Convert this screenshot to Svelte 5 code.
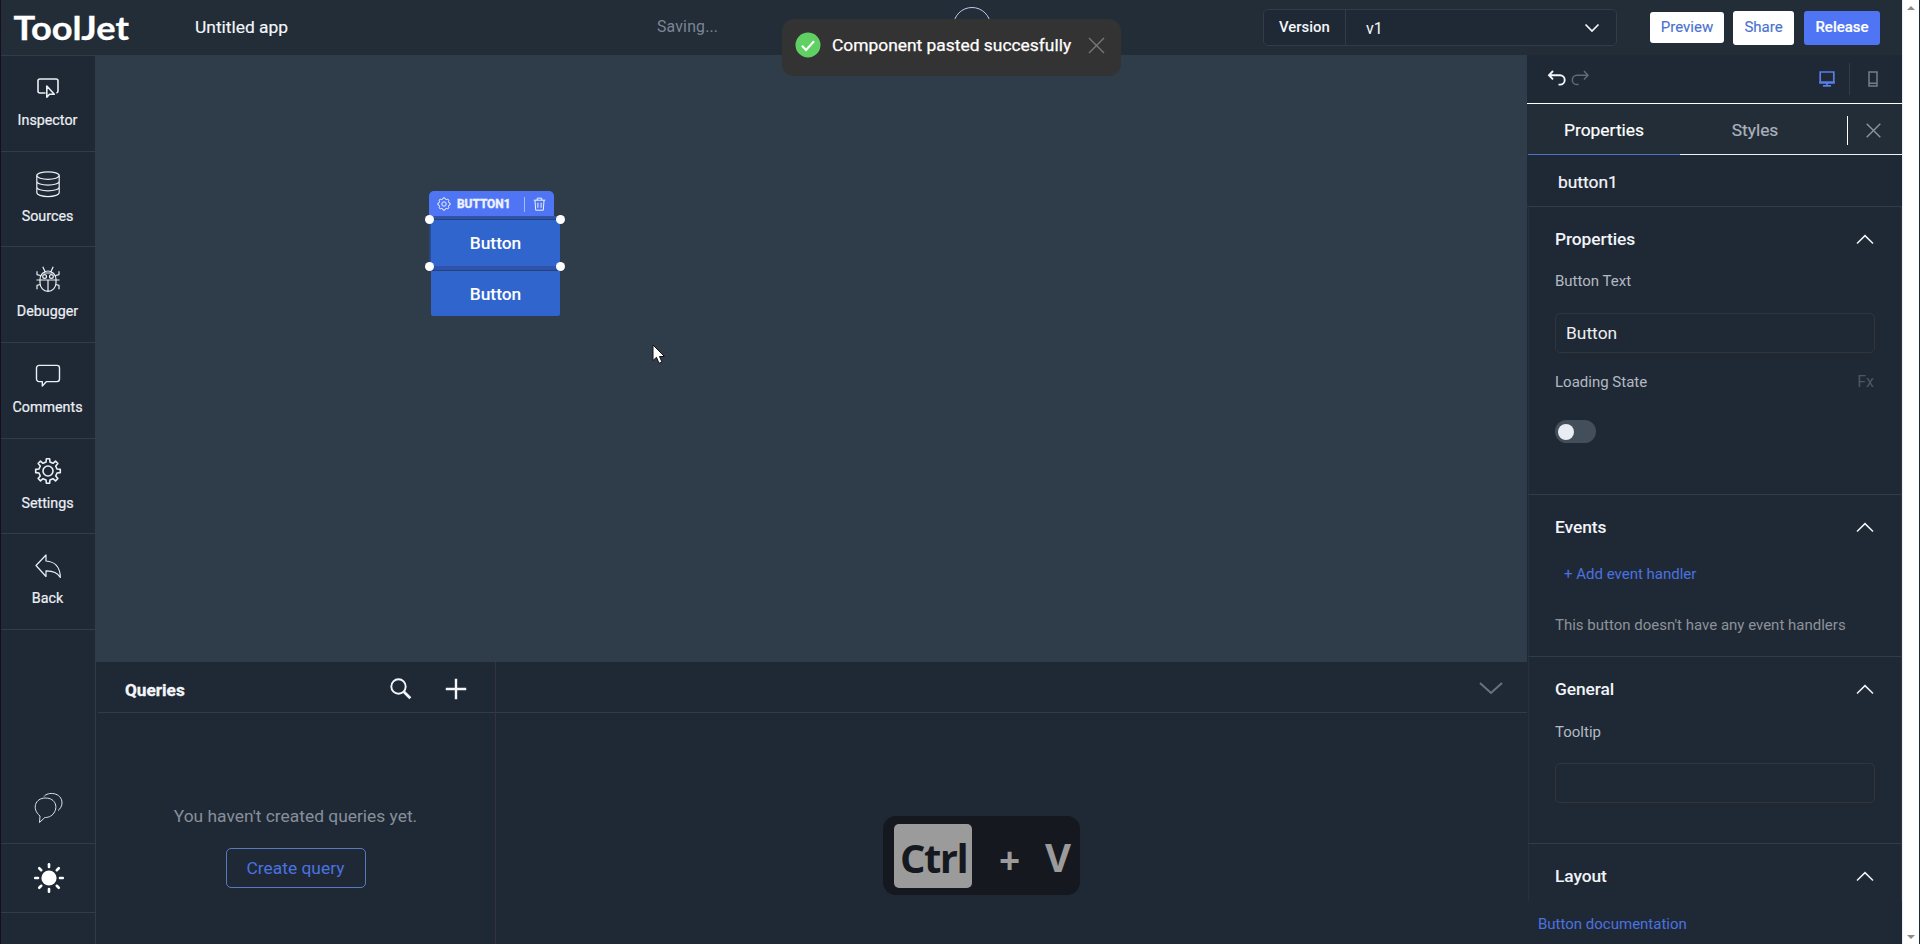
<script>
  const nav = [
    { label: 'Inspector', icon: 'inspector' },
    { label: 'Sources', icon: 'sources' },
    { label: 'Debugger', icon: 'debugger' },
    { label: 'Comments', icon: 'comments' },
    { label: 'Settings', icon: 'settings' },
    { label: 'Back', icon: 'back' }
  ];

  const gear = (cx, cy, outer, inner, teeth) => {
    const pts = [];
    const step = (Math.PI * 2) / teeth;
    for (let i = 0; i < teeth; i++) {
      const a = i * step - Math.PI / 2;
      for (const [offset, radius] of [[-0.27, inner], [-0.17, outer], [0.17, outer], [0.27, inner]]) {
        const t = a + offset * step;
        pts.push(`${(cx + radius * Math.cos(t)).toFixed(2)} ${(cy + radius * Math.sin(t)).toFixed(2)}`);
      }
    }
    return 'M' + pts.join('L') + 'Z';
  };
  const settingsGear = gear(13, 13, 12.4, 9.2, 8);
  const smallGear = gear(7, 7, 6.2, 5.2, 8);
  const rays = [0, 45, 90, 135, 180, 225, 270, 315];
</script>

{#snippet chevron()}
  <svg class="chev" width="18" height="11" viewBox="0 0 18 11"><path d="M1 9.500 9 1.600 17 9.500" /></svg>
{/snippet}

<div class="screen">
  <div class="app">
    <header>
      <svg class="logo" width="118" height="30" viewBox="0 0 118 30"><text x="0.500" y="25.500" textLength="115.500" lengthAdjust="spacingAndGlyphs">ToolJet</text></svg>
      <span class="app-name">Untitled app</span>
      <span class="saving">Saving...</span>
      <span class="avatar"></span>
      <div class="version">
        <span class="version-label">Version</span>
        <span class="version-value">v1</span>
        <svg width="16" height="10" viewBox="0 0 16 10"><path d="M1.500 1.500 8 8 14.500 1.500" /></svg>
      </div>
      <div class="actions">
        <button class="preview">Preview</button>
        <button>Share</button>
        <button class="release">Release</button>
      </div>
    </header>

    <div class="body">
      <nav>
        {#each nav as item}
          <div class="nav-item">
            <svg width="26" height="26" viewBox="0 0 26 26">
              {#if item.icon === 'inspector'}
                <g stroke-width="1.600"><path d="M10.500 18H5a2 2 0 0 1-2-2V6a2 2 0 0 1 2-2h16a2 2 0 0 1 2 2v10a2 2 0 0 1-1.600 2" /><path d="M11.800 11v11.200l2.700-3h4.800z" /></g>
              {:else if item.icon === 'sources'}
                <ellipse cx="13" cy="4.600" rx="11.200" ry="3.800" /><path d="M1.800 4.600v17c0 2.200 5 4 11.200 4s11.200-1.800 11.200-4v-17M1.800 10.300c0 2.200 5 3.800 11.200 3.800s11.200-1.600 11.200-3.800M1.800 16c0 2.200 5 3.800 11.200 3.800s11.200-1.600 11.200-3.800" />
              {:else if item.icon === 'debugger'}
                <path d="M5 13.500a8 8.500 0 0 1 16 0v3.500c0 4.600-3.500 8.300-8 8.300s-8-3.700-8-8.300zM5 14h16M13 14v11M7.500 7h11M10 5.500 7.800.8M16 5.500 18.200.8M5 14H1.500M24.500 14H21M5.300 9.500 2 8.600V5.200M20.700 9.500 24 8.600V5.200M5.300 18.500 2 19.400v3.800M20.700 18.500l3.300.9v3.800" /><circle cx="9.600" cy="10.500" r="1.900" /><circle cx="16.400" cy="10.500" r="1.900" />
              {:else if item.icon === 'comments'}
                <path d="M4 3.400h18a2.500 2.500 0 0 1 2.500 2.500v11.200a2.500 2.500 0 0 1-2.500 2.500H11.500L7.300 24v-4.400H4a2.500 2.500 0 0 1-2.500-2.500V5.900A2.500 2.500 0 0 1 4 3.400z" stroke-width="1.400" />
              {:else if item.icon === 'settings'}
                <path d={settingsGear} stroke-width="1.600" /><circle cx="13" cy="13" r="5" stroke-width="1.600" />
              {:else}
                <path d="M1 12.500 11 2v6c8.500.5 14.200 6 14.300 16.500-2.600-4.700-7.300-6.800-14.300-6.700v5.700z" />
              {/if}
            </svg>
            <span>{item.label}</span>
          </div>
        {/each}
        <div class="chat">
          <svg width="30" height="32" viewBox="0 0 30 32"><path d="M10 4.500C13.500-.5 28 0 28 11c0 3-1.800 6-4 7.500M5.500 30.500l.5-6.500C-2.500 17 1 6 11.500 6S24.500 16 19 22.200C16 25.500 12 25.500 10.800 25.500z" /></svg>
        </div>
        <div class="theme">
          <svg width="32" height="32" viewBox="0 0 32 32"><circle cx="16" cy="16" r="7.600" />{#each rays as r}<path d="M16 2.200v2.800" transform="rotate({r} 16 16)" />{/each}</svg>
        </div>
      </nav>

      <main>
        <div class="canvas">
          <div class="tag">
            <svg width="14" height="14" viewBox="0 0 14 14"><path d={smallGear} /><circle cx="7" cy="7" r="2.200" /></svg>
            <span>BUTTON1</span>
            <i></i>
            <svg width="13" height="14" viewBox="0 0 13 14"><path d="M.8 3.200h11.400M4.200 3V1.200h4.600V3M2 3.400l.7 9.800h7.600l.7-9.800M4.900 5.800v5M8.100 5.800v5" /></svg>
          </div>
          <div class="widget selected">Button<b></b><b></b><b></b><b></b></div>
          <div class="widget second">Button</div>
          <svg class="cursor" width="14" height="21" viewBox="0 0 14 21"><path d="M1 1v15.500l3.500-3.200 2.500 6 3-1.300-2.500-5.500h5z" /></svg>
        </div>

        <div class="queries">
          <section class="list">
            <div class="qhead">
              <h2>Queries</h2>
              <svg width="22" height="22" viewBox="0 0 22 22"><circle cx="8.500" cy="8.500" r="7.200" stroke-width="1.900" /><path d="m13.800 13.800 6.500 6.500" stroke-width="2.800" /></svg>
              <svg width="22" height="22" viewBox="0 0 22 22"><path d="M11 .8v20.400M.8 11h20.400" stroke-width="2.400" /></svg>
            </div>
            <div class="empty">
              <p>You haven't created queries yet.</p>
              <button>Create query</button>
            </div>
          </section>
          <section class="editor">
            <div class="ehead">
              <svg width="24" height="13" viewBox="0 0 24 13"><path d="m1 1 11 10L23 1" /></svg>
            </div>
          </section>
        </div>
      </main>

      <aside>
        <div class="tools">
          <svg width="20" height="17" viewBox="0 0 20 17"><path d="M6 1 2 5.200 6 9.400M2 5.200h11a4.600 4.600 0 0 1 0 9.400h-1.500" /></svg>
          <svg class="redo" width="20" height="17" viewBox="0 0 20 17"><path d="M14 1 18 5.200 14 9.400M18 5.200H7a4.600 4.600 0 0 0 0 9.400h1.500" /></svg>
          <svg class="desktop" width="16" height="16" viewBox="0 0 16 16"><path d="M1.200 1h13.600v10.500H1.200zM1 11h14v1H1zM4 14.900h8M8 12v3" /></svg>
          <i></i>
          <svg class="mobile" width="10" height="16" viewBox="0 0 10 16"><path d="M1 1h8v14H1zM1 12.300h8" /></svg>
        </div>
        <div class="tabs">
          <span class="active">Properties</span>
          <span>Styles</span>
          <div class="close"><i></i><svg width="15" height="15" viewBox="0 0 15 15"><path d="m.7.700 13.600 13.600M14.300.7.700 14.300" /></svg></div>
        </div>
        <div class="name">button1</div>
        <section class="group props">
          <h3>Properties {@render chevron()}</h3>
          <label for="text">Button Text</label>
          <div class="input" id="text">Button</div>
          <div class="row"><span>Loading State</span><em>Fx</em></div>
          <div class="toggle"></div>
        </section>
        <section class="group events">
          <h3>Events {@render chevron()}</h3>
          <a href="#add">+ Add event handler</a>
          <p>This button doesn't have any event handlers</p>
        </section>
        <section class="group general">
          <h3>General {@render chevron()}</h3>
          <div class="tip-label">Tooltip</div>
          <div class="input"></div>
        </section>
        <section class="group layout">
          <h3>Layout {@render chevron()}</h3>
        </section>
        <a class="doc" href="#doc">Button documentation</a>
      </aside>
    </div>
  </div>
  <div class="scrollbar"><i class="up"></i><i class="down"></i></div>

  <div class="toast">
    <svg width="26" height="26" viewBox="0 0 26 26"><circle cx="13" cy="13" r="12.500" /><path d="m7 13.700 4 4.300 8-8.700" /></svg>
    <span>Component pasted succesfully</span>
    <svg class="x" width="17" height="17" viewBox="0 0 17 17"><path d="m1 1 15 15M16 1 1 16" /></svg>
  </div>
  <div class="keys"><kbd>Ctrl</kbd><span class="plus">+</span><span>V</span></div>
</div>

<style>
  :global(body) { background: #1f2935; overflow: hidden; }
  .screen { position: relative; display: flex; width: 1920px; height: 944px; box-sizing: border-box; border-left: 1px solid #16101c; overflow: hidden; font: 17.4px/24px Roboto, sans-serif; color: #f4f6fa; background: #1f2935; }
  .screen * { box-sizing: border-box; }
  svg { display: block; flex: none; fill: none; stroke: currentColor; overflow: visible; }
  h2, h3, p { margin: 0; font-size: inherit; }
  button { font: inherit; cursor: pointer; padding: 0; }
  a { color: #4b72e0; text-decoration: none; }
  .app { width: 1901px; display: flex; flex-direction: column; }

  header { height: 55px; flex: none; display: flex; align-items: center; background: #222d38; padding: 0 22px 0 12px; }
  .logo { margin-top: 2px; }
  .logo text { font: 700 32px Lato, sans-serif; fill: #fff; stroke: #fff; stroke-width: .3px; }
  .app-name { margin: -1px 0 0 64px; width: 462px; -webkit-text-stroke: .15px; }
  .saving { color: #7c8595; font-size: 15.800px; letter-spacing: .2px; width: 296px; margin-top: -1px; }
  .avatar { width: 38px; height: 38px; margin-top: -3px; border: 1.500px solid #b9cdf0; border-radius: 50%; }
  .version { margin-left: 272px; width: 354px; height: 37px; display: flex; align-items: center; border: 1px solid #2f3c49; border-radius: 5px; background: #1f2935; }
  .version-label { width: 82px; height: 100%; line-height: 34px; padding-left: 15px; border-right: 1px solid #2f3c49; font-weight: 500; font-size: 14.900px; }
  .version-value { flex: 1; padding: 3px 0 0 20px; font-size: 16px; }
  .version svg { margin-right: 16px; stroke-width: 1.700; }
  .actions { display: flex; align-items: center; gap: 9px; margin-left: 33px; }
  .actions button { height: 34px; width: 61px; border: 0; border-radius: 3px; background: #fff; color: #4a73d0; font-size: 15px; padding-bottom: 1px; -webkit-text-stroke: .15px; }
  .actions .preview { width: 74px; height: 31px; }
  .actions .release { width: 76px; background: #4f75f5; color: #fff; font-weight: 500; margin-left: 1px; }

  .body { flex: 1; min-height: 0; display: flex; }
  nav { width: 95px; display: flex; flex-direction: column; border-right: 1px solid #2f3d4a; border-top: 1px solid #2f3d4a; background: #1f2935; }
  .nav-item { height: 95.700px; flex: none; display: flex; flex-direction: column; align-items: center; padding: 19px 1px 0 0; border-bottom: 1px solid #2f3d4a; font-size: 14.300px; color: #eceff4; }
  .nav-item svg { stroke-width: 1.200; stroke-linejoin: round; }
  .nav-item span { line-height: 20px; margin-top: 9px; -webkit-text-stroke: .2px; }
  .chat { flex: 1; display: flex; align-items: flex-end; justify-content: center; padding: 0 0 19px 1px; color: #dfe4ee; border-bottom: 1px solid #2f3d4a; }
  .theme { height: 69px; margin-bottom: 31px; display: grid; place-items: center; padding-left: 2px; border-bottom: 1px solid #2f3d4a; color: #fff; }
  .theme circle { fill: #fff; stroke: none; }
  .theme path { stroke-width: 2.600; stroke-linecap: round; }

  main { width: 1431px; display: flex; flex-direction: column; }
  .canvas { position: relative; height: 607px; flex: none; background: #2f3c49; }
  .tag { position: absolute; left: 333px; top: 136px; width: 125px; height: 28px; padding: 0 8px 2px 8px; display: flex; align-items: center; gap: 6px; background: #4f75f5; border-radius: 5px 5px 0 0; font: 700 11.900px/16px Roboto, sans-serif; color: #eef2ff; -webkit-text-stroke: .4px; }
  .tag i { width: 1px; height: 15px; margin: 0 2px 0 auto; background: #aabcf5; }
  .widget { position: absolute; left: 335px; width: 129px; display: grid; place-items: center; background: #3065ce; color: #fff; font-weight: 500; }
  .selected { top: 161px; height: 54px; border-top: 3px solid #3053a9; border-bottom: 4px solid #3053a9; box-shadow: inset 0 1px #21417f, -1.500px 0 #284c9c, 0 1px #21417f; }
  .selected b { position: absolute; width: 9px; height: 9px; border-radius: 50%; background: #fff; }
  .selected b:nth-child(1) { left: -6px; top: -4px; }
  .selected b:nth-child(2) { right: -5px; top: -4px; }
  .selected b:nth-child(3) { left: -6px; bottom: -5px; }
  .selected b:nth-child(4) { right: -5px; bottom: -5px; }
  .second { top: 216px; height: 45px; border-radius: 0 0 2px 2px; }
  .cursor { position: absolute; left: 556px; top: 289px; fill: #fff; stroke: #161018; }

  .queries { flex: 1; display: flex; }
  .list { width: 400px; border-right: 1px solid #33353b; }
  .qhead, .ehead { height: 51px; display: flex; align-items: center; border-bottom: 1px solid #2f3d4a; }
  .qhead { margin-left: 2px; padding: 6px 28px 0 27px; }
  .qhead h2 { flex: 1; font-weight: 700; font-size: 17.200px; -webkit-text-stroke: .3px; }
  .qhead svg { margin: -3px 0 0 33px; }
  .empty { display: flex; flex-direction: column; align-items: center; padding-top: 91px; }
  .empty p { color: #878f9b; }
  .empty button { margin-top: 20px; width: 140px; height: 40px; border: 1px solid #5779bd; border-radius: 5px; background: none; color: #4b72e0; }
  .editor { flex: 1; }
  .ehead { justify-content: flex-end; padding: 3px 24px 0 0; color: #69737f; }
  .ehead svg { stroke-width: 2; }

  aside { width: 375px; display: flex; flex-direction: column; overflow: hidden; background: #1f2935; }
  .tools { height: 49px; flex: none; display: flex; align-items: center; padding: 0 24px 1px 20px; border-bottom: 1.500px solid #fff; }
  .tools svg { stroke-width: 1.900; }
  .tools .redo { margin-left: 3px; color: #606b79; stroke-width: 1.500; }
  .tools .desktop { margin-left: auto; color: #587ee8; stroke-width: 1.700; }
  .tools i { width: 1px; height: 32px; background: #2f3d4a; margin: 0 18px 0 14px; }
  .tools .mobile { color: #747d8a; stroke-width: 1.500; }
  .tabs { height: 51px; flex: none; display: flex; background: #222d38; color: #abb2bd; padding-left: 1px; }
  .tabs span { width: 150px; padding-top: 14px; text-align: center; border-bottom: 1px solid #eef2f6; -webkit-text-stroke: .2px; }
  .tabs .active { width: 152px; color: #fff; border-color: #4d73c4; }
  .tabs .close { flex: 1; display: flex; align-items: center; gap: 18px; padding: 2px 0 0 17px; border-bottom: 1px solid #eef2f6; color: #8b95a4; }
  .close i { width: 1px; height: 29px; background: #fff; }
  .close svg { stroke-width: 1.400; }
  .name { height: 52px; flex: none; padding: 15px 0 0 31px; border-bottom: 1px solid #2f3d4a; -webkit-text-stroke: .2px; }
  .group { flex: none; margin-left: 1px; padding: 20px 27px 0 26px; border: 1px solid #26313d; border-top: 0; border-bottom: 1px solid #2f3d4a; border-right-color: #33353b; font-size: 15px; color: #b3b9c3; }
  .group h3 { display: flex; justify-content: space-between; align-items: center; font-size: 17.400px; font-weight: 500; letter-spacing: -.1px; color: #f1f4f9; }
  .chev { stroke-width: 1.500; }
  .props { height: 288px; }
  .props label { display: block; margin-top: 18px; }
  .input { height: 40px; width: 320px; margin-top: 20px; border: 1px solid #333539; border-radius: 5px; padding-left: 10px; line-height: 38px; font-size: 17.400px; color: #eceff0; }
  .row { display: flex; justify-content: space-between; margin-top: 17px; }
  .row em { font-style: normal; font-size: 16px; color: #4b5663; }
  .toggle { margin-top: 26px; width: 41px; height: 23px; border-radius: 12px; background: #434e5b; padding: 3.500px 3px; }
  .toggle::before { content: ''; display: block; width: 16px; height: 16px; border-radius: 50%; background: #e9ecf2; }
  .events { height: 162px; }
  .events a { display: block; margin: 23px 0 0 9px; }
  .events p { margin-top: 27px; color: #8d9299; }
  .general { height: 187px; }
  .tip-label { margin-top: 19px; }
  .general .input { margin-top: 19px; }
  .layout { height: 57px; border-bottom: 0; }
  .doc { margin: 11px 0 0 11px; font-size: 15px; }

  .scrollbar { width: 17px; background: #fff; border-left: 1px solid #e8edf6; display: flex; flex-direction: column; justify-content: space-between; align-items: center; padding: 6px 0 5px; }
  .scrollbar i { border: 4px solid transparent; }
  .scrollbar .up { border-top: 0; border-bottom-color: #8b8b8b; }
  .scrollbar .down { border-bottom: 0; border-top-color: #8b8b8b; }

  .toast { position: absolute; left: 781px; top: 19px; width: 339px; height: 57px; display: flex; align-items: center; padding: 0 16px 5px 13px; border-radius: 12px; background: #333; color: #fff; }
  .toast circle { fill: #61d064; stroke: none; }
  .toast path { stroke-width: 2; }
  .toast span { margin: -1px 0 0 11px; -webkit-text-stroke: .25px; white-space: nowrap; }
  .toast .x { margin-left: auto; color: #75787c; }
  .toast .x path { stroke-width: 1.400; }
  .keys { position: absolute; left: 882px; top: 816px; width: 197px; height: 79px; display: flex; align-items: center; padding: 0 0 0 11px; border-radius: 13px; background: #15181f; color: #9b9b9b; font: 700 40px/64px "Open Sans", sans-serif; }
  .keys kbd { width: 78px; height: 64px; padding: 2px 0 0 6px; font: inherit; letter-spacing: -1.500px; border-radius: 5px; background: #9b9b9b; color: #15181f; }
  .keys span { width: 28px; margin-left: 24px; padding-top: 2px; }
  .keys .plus { width: 22px; margin-left: 27px; font-size: 37px; padding-top: 9px; }
</style>
